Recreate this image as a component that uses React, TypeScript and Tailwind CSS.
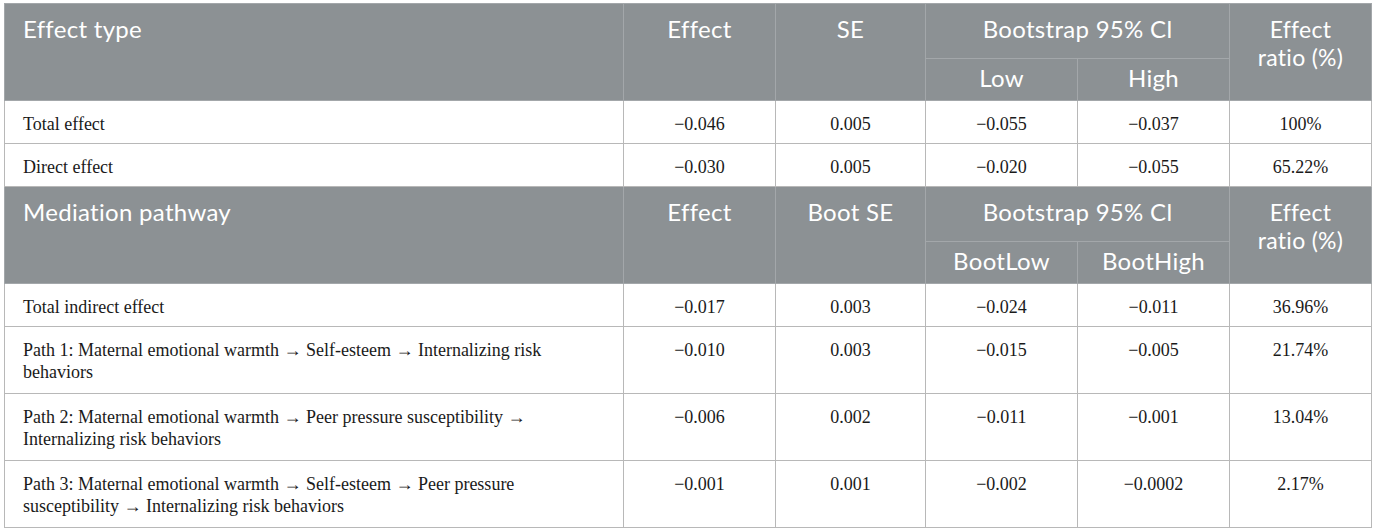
import React from "react";

type Row = {
  label: string;
  effect: string;
  se: string;
  low: string;
  high: string;
  ratio: string;
  tall?: boolean;
};

const topRows: Row[] = [
  { label: "Total effect", effect: "−0.046", se: "0.005", low: "−0.055", high: "−0.037", ratio: "100%" },
  { label: "Direct effect", effect: "−0.030", se: "0.005", low: "−0.020", high: "−0.055", ratio: "65.22%" },
];

const pathRows: Row[] = [
  { label: "Total indirect effect", effect: "−0.017", se: "0.003", low: "−0.024", high: "−0.011", ratio: "36.96%" },
  {
    label: "Path 1: Maternal emotional warmth → Self-esteem → Internalizing risk behaviors",
    effect: "−0.010",
    se: "0.003",
    low: "−0.015",
    high: "−0.005",
    ratio: "21.74%",
    tall: true,
  },
  {
    label: "Path 2: Maternal emotional warmth → Peer pressure susceptibility → Internalizing risk behaviors",
    effect: "−0.006",
    se: "0.002",
    low: "−0.011",
    high: "−0.001",
    ratio: "13.04%",
    tall: true,
  },
  {
    label: "Path 3: Maternal emotional warmth → Self-esteem → Peer pressure susceptibility → Internalizing risk behaviors",
    effect: "−0.001",
    se: "0.001",
    low: "−0.002",
    high: "−0.0002",
    ratio: "2.17%",
    tall: true,
  },
];

const th =
  "border border-[#a3a7aa] bg-[#8c9194] text-white font-['Lato','Open_Sans',sans-serif] tracking-[0.3px] font-normal align-top";
const td =
  "border border-[#b8b8b8] text-[#1a1a1a] font-['Liberation_Serif','Times_New_Roman',serif] text-[18px] leading-[22px] align-top pt-[12px]";

const Header = ({ first, se, low, high }: { first: string; se: string; low: string; high: string }) => (
  <>
    <tr className="h-[55px]">
      <th rowSpan={2} className={`${th} text-[24px] leading-[26px] text-left pl-[18px] pt-[12px]`}>
        {first}
      </th>
      <th rowSpan={2} className={`${th} text-[24px] leading-[26px] pt-[12px]`}>
        Effect
      </th>
      <th rowSpan={2} className={`${th} text-[24px] leading-[26px] pt-[12px]`}>
        {se}
      </th>
      <th colSpan={2} className={`${th} text-[24px] leading-[26px] pt-[12px]`}>
        Bootstrap 95% Cl
      </th>
      <th rowSpan={2} className={`${th} text-[23px] leading-[28px] pt-[11px]`}>
        Effect
        <br />
        ratio (%)
      </th>
    </tr>
    <tr className="h-[42px]">
      <th className={`${th} text-[24px] leading-[26px] align-middle pt-[6px]`}>{low}</th>
      <th className={`${th} text-[24px] leading-[26px] align-middle pt-[6px]`}>{high}</th>
    </tr>
  </>
);

const Body = ({ row }: { row: Row }) => (
  <tr className={row.tall ? "h-[67px]" : "h-[43px]"}>
    <td className={`${td} pl-[18px] pr-[50px]`}>{row.label}</td>
    <td className={`${td} text-center`}>{row.effect}</td>
    <td className={`${td} text-center`}>{row.se}</td>
    <td className={`${td} text-center`}>{row.low}</td>
    <td className={`${td} text-center`}>{row.high}</td>
    <td className={`${td} text-center`}>{row.ratio}</td>
  </tr>
);

export default function App() {
  return (
    <div className="bg-white w-[1375px] h-[531px] pl-[4px] pt-[3px]">
      <table className="table-fixed border-collapse w-[1367px] border border-[#b8b8b8]">
        <colgroup>
          <col className="w-[619px]" />
          <col className="w-[152px]" />
          <col className="w-[150px]" />
          <col className="w-[152px]" />
          <col className="w-[152px]" />
          <col className="w-[142px]" />
        </colgroup>
        <tbody>
          <Header first="Effect type" se="SE" low="Low" high="High" />
          {topRows.map((r) => (
            <Body key={r.label} row={r} />
          ))}
          <Header first="Mediation pathway" se="Boot SE" low="BootLow" high="BootHigh" />
          {pathRows.map((r) => (
            <Body key={r.label} row={r} />
          ))}
        </tbody>
      </table>
    </div>
  );
}
